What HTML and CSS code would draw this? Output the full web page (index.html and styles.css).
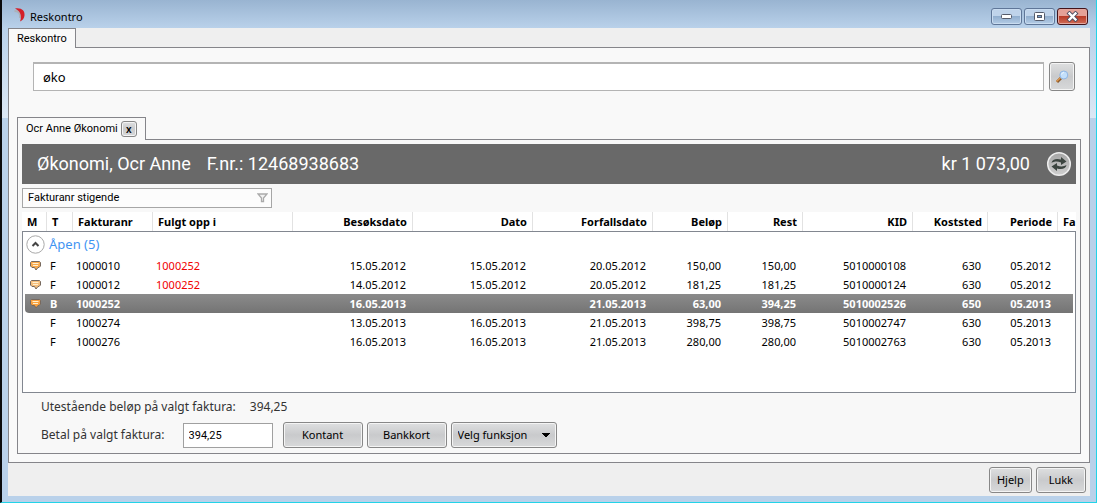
FILE: index.html
```html
<!DOCTYPE html>
<html lang="no">
<head>
<meta charset="utf-8">
<title>Reskontro</title>
<link rel="stylesheet" href="styles.css">
</head>
<body>
<div class="window">
  <header class="titlebar">
    <svg class="app-icon" width="12" height="16" viewBox="0 0 12 16" aria-hidden="true">
      <path d="M.5 4C4.500 4 7 6.500 6 11" fill="none" stroke="#aeb0b6" stroke-width="2"/>
      <path d="M1 1.500C7.500 .5 11 3.500 10.500 8.500C10.200 11.500 8.500 13.500 6 14.500C8 9.500 7 4.500 1 1.500Z" fill="#d3202a"/>
    </svg>
    <h1 class="title">Reskontro</h1>
    <div class="window-controls">
      <button class="wc" aria-label="Minimer"><svg width="13" height="7" viewBox="0 0 13 7"><rect x="1.500" y="1.500" width="10" height="4" rx="1" fill="#fff" stroke="#555b6b"/></svg></button>
      <button class="wc" aria-label="Maksimer"><svg width="13" height="11" viewBox="0 0 13 11"><rect x="1.500" y="1.500" width="10" height="8" rx="1" fill="#fff" stroke="#555b6b"/><rect x="4.500" y="4.500" width="4" height="2" fill="#7ba4cf" stroke="#555b6b"/></svg></button>
      <button class="wc wc-close" aria-label="Lukk vindu"><svg width="13" height="11" viewBox="0 0 13 11"><path d="M3.500 2.500L9.500 8.500M9.500 2.500L3.500 8.500" stroke="#4d4c60" stroke-width="4.200" stroke-linecap="square"/><path d="M3.500 2.500L9.500 8.500M9.500 2.500L3.500 8.500" stroke="#fff" stroke-width="2.400" stroke-linecap="square"/></svg></button>
    </div>
  </header>

  <div class="client">
    <div class="tabstrip"><button class="tab">Reskontro</button></div>
    <main class="page">
      <form class="search">
        <input class="search-input" type="text" value="øko" aria-label="Søk">
        <button class="btn search-btn" type="button" aria-label="Søk">
          <svg width="14" height="14" viewBox="0 0 14 14"><path d="M6 8L2 12" stroke="#8b5a2b" stroke-width="3"/><path d="M5.500 7.800L1.500 11.500" stroke="#e0994f" stroke-width="1.300"/><circle cx="8.800" cy="5" r="4" fill="#c3dffb" stroke="#8fb5e3"/><path d="M6.500 4.500A2.500 2.500 0 0 1 9 2.500" stroke="#eef7ff" fill="none"/></svg>
        </button>
      </form>

      <div class="tabstrip inner-strip">
        <div class="tab inner-tab"><span>Ocr Anne Økonomi</span><button class="btn tab-close" aria-label="Lukk fane">x</button></div>
      </div>
      <section class="panel">
        <div class="patient">
          <span>Økonomi, Ocr Anne</span>
          <span>F.nr.: 12468938683</span>
          <span class="balance">kr 1 073,00</span>
          <button class="refresh" aria-label="Oppdater">
            <svg width="26" height="26" viewBox="0 0 26 26"><defs><linearGradient id="disc" x2="0" y2="1"><stop offset="0" stop-color="#a5a5a5"/><stop offset="1" stop-color="#cfcfcf"/></linearGradient></defs><circle cx="13" cy="13" r="11.300" fill="url(#disc)" stroke="#ededed" stroke-width="1.500"/><path d="M5.500 12C6 8.500 10 7 15 8.500V6L20.500 10.500L15 14V11.500C11 10 8 10.500 5.500 12Z" fill="#3c4540"/><path d="M20.500 14C20 17.500 16 19 11 17.500V20L5.500 15.500L11 12V14.500C15 16 18 15.500 20.500 14Z" fill="#3c4540"/></svg>
          </button>
        </div>

        <div class="sort">
          <select class="sort-select" aria-label="Sortering"><option>Fakturanr stigende</option></select>
          <svg class="funnel" width="11" height="10" viewBox="0 0 11 10" aria-hidden="true"><path d="M1 1H10L6.500 5V8.500H4.500V5Z" fill="#f2f2f2" stroke="#aaa" stroke-width="1.300"/></svg>
        </div>

        <div class="grid">
          <table class="invoices">
            <colgroup><col class="c-m"><col class="c-t"><col class="c-nr"><col class="c-follow"><col class="c-date"><col class="c-date"><col class="c-date"><col class="c-sum"><col class="c-sum"><col class="c-kid"><col class="c-sum"><col class="c-per"><col></colgroup>
            <thead>
              <tr><th>M</th><th>T</th><th>Fakturanr</th><th>Fulgt opp i</th><th class="num">Besøksdato</th><th class="num">Dato</th><th class="num">Forfallsdato</th><th class="num">Beløp</th><th class="num">Rest</th><th class="num">KID</th><th class="num">Koststed</th><th class="num">Periode</th><th>Fa</th></tr>
            </thead>
            <tbody>
              <tr class="group"><td colspan="13"><button class="group-toggle"><svg width="19" height="19" viewBox="0 0 19 19"><circle cx="9.500" cy="9.500" r="8.700" fill="#fff" stroke="#a8a8a8"/><path d="M6.500 11L9.500 8L12.500 11" fill="none" stroke="#444" stroke-width="2"/></svg><span>Åpen (5)</span></button></td></tr>
              <tr><td class="note"><svg width="11" height="10" viewBox="0 0 11 10"><path d="M1.500 .500H9.500L10.500 1.500V5L9 6.500H8L6 9L4.500 6.500H2L.500 5V1.500Z" fill="#f9a94c" stroke="#76695f"/><path d="M2.500 2.500H8.500M3 4.500H8" stroke="#fff0cf"/></svg></td><td>F</td><td>1000010</td><td class="follow">1000252</td><td class="num">15.05.2012</td><td class="num">15.05.2012</td><td class="num">20.05.2012</td><td class="num">150,00</td><td class="num">150,00</td><td class="num">5010000108</td><td class="num">630</td><td class="num">05.2012</td><td></td></tr>
              <tr><td class="note"><svg width="11" height="10" viewBox="0 0 11 10"><path d="M1.500 .500H9.500L10.500 1.500V5L9 6.500H8L6 9L4.500 6.500H2L.500 5V1.500Z" fill="#f5bd7b" stroke="#76695f"/><path d="M2.500 2.500H8.500M3 4.500H8" stroke="#fff0cf"/></svg></td><td>F</td><td>1000012</td><td class="follow">1000252</td><td class="num">14.05.2012</td><td class="num">15.05.2012</td><td class="num">20.05.2012</td><td class="num">181,25</td><td class="num">181,25</td><td class="num">5010000124</td><td class="num">630</td><td class="num">05.2012</td><td></td></tr>
              <tr class="selected"><td class="note"><svg width="11" height="10" viewBox="0 0 11 10"><path d="M1.500 .500H9.500L10.500 1.500V5L9 6.500H8L6 9L4.500 6.500H2L.500 5V1.500Z" fill="#f9a03c" stroke="#76695f"/><path d="M2.500 2.500H8.500M3 4.500H8" stroke="#fff0cf"/></svg></td><td>B</td><td>1000252</td><td></td><td class="num">16.05.2013</td><td></td><td class="num">21.05.2013</td><td class="num">63,00</td><td class="num">394,25</td><td class="num">5010002526</td><td class="num">650</td><td class="num">05.2013</td><td></td></tr>
              <tr><td></td><td>F</td><td>1000274</td><td></td><td class="num">13.05.2013</td><td class="num">16.05.2013</td><td class="num">21.05.2013</td><td class="num">398,75</td><td class="num">398,75</td><td class="num">5010002747</td><td class="num">630</td><td class="num">05.2013</td><td></td></tr>
              <tr><td></td><td>F</td><td>1000276</td><td></td><td class="num">16.05.2013</td><td class="num">16.05.2013</td><td class="num">21.05.2013</td><td class="num">280,00</td><td class="num">280,00</td><td class="num">5010002763</td><td class="num">630</td><td class="num">05.2013</td><td></td></tr>
            </tbody>
          </table>
        </div>

        <div class="payment">
          <div class="outstanding"><span>Utestående beløp på valgt faktura:</span><output>394,25</output></div>
          <div class="pay-row">
            <label for="amount">Betal på valgt faktura:</label>
            <input class="amount" id="amount" type="text" value="394,25">
            <div class="actions">
              <button class="btn pay-btn">Kontant</button>
              <button class="btn pay-btn">Bankkort</button>
              <select class="btn function-select" aria-label="Velg funksjon"><option>Velg funksjon</option></select>
            </div>
          </div>
        </div>
      </section>
    </main>
    <footer class="footer"><button class="btn">Hjelp</button><button class="btn btn-wide">Lukk</button></footer>
  </div>
</div>
</body>
</html>
```
FILE: styles.css
```css
* { box-sizing: border-box; }

body {
  margin: 0;
  font-family: "Noto Sans", "Open Sans", sans-serif;
  font-size: 11px;
  line-height: 16px;
  color: #000;
}

button, input, select { font: inherit; color: inherit; margin: 0; }
button { padding: 0; }
svg { display: block; flex: none; }

.window {
  min-height: 100vh;
  display: flex;
  flex-direction: column;
  padding: 0 6px 6px;
  border-left: 2px solid #0a0a0c;
  border-right: 1px solid #22d3e8;
  border-bottom: 1px solid #22d3e8;
  background: linear-gradient(#99b4d1, #b9d1ea 28px, #dce8f5 118px, #b9d1ea 118px);
}

.titlebar {
  height: 28px;
  display: flex;
  align-items: center;
  gap: 4px;
  padding: 2px 2px 0 6px;
}

.title { margin: 0; font-size: 11px; font-weight: 400; flex: 1; padding-top: 3px; }

.window-controls { display: flex; gap: 2px; padding-top: 3px; }

.wc {
  width: 31px;
  height: 17px;
  display: flex;
  align-items: center;
  justify-content: center;
  border: 1px solid #5f7698;
  border-radius: 3px;
  box-shadow: inset 0 0 0 1px #c9dcf0;
  background: linear-gradient(#bfd3ea 50%, #92afcf 50%, #b4cce6);
}

.wc-close {
  border-color: #43141b;
  box-shadow: inset 0 0 0 1px #e3a79f;
  background: linear-gradient(#e5a197 50%, #b93c28 50%, #cf6c58);
}

.client { flex: 1; display: flex; flex-direction: column; background: #efefef; }

.tabstrip { display: flex; height: 19px; }

.tab {
  height: 20px;
  padding: 0 8px;
  border: 1px solid #85858a;
  border-bottom: 0;
  background: #f9f9f9;
  font-family: Roboto, "Noto Sans", sans-serif;
  position: relative;
  z-index: 1;
}

.page {
  flex: 1;
  display: flex;
  flex-direction: column;
  padding: 14px 8px 8px;
  border: 1px solid #85858a;
  background: #f9f9f9;
}

.search { display: flex; gap: 5px; padding: 0 6px 0 16px; }

.search-input {
  flex: 1;
  min-width: 0;
  height: 29px;
  padding: 0 9px;
  border: 1px solid #b4b4b4;
  border-top: 2px solid #b4b4b4;
  background: #fff;
  font-size: 13px;
}

.btn {
  height: 26px;
  border: 1px solid #878787;
  border-radius: 3px;
  box-shadow: inset 0 0 0 1px #f4f4f4;
  background: linear-gradient(#dedfe0, #c9cacc 50%, #d8d9da);
}

.search-btn { width: 26px; height: 29px; padding-left: 5px; }

.inner-strip { height: 22px; margin-top: 26px; }

.inner-tab { height: 23px; display: flex; align-items: center; gap: 3px; }

.tab-close {
  width: 16px;
  height: 16px;
  font-family: "Noto Sans", sans-serif;
  font-size: 10px;
  line-height: 12px;
  font-weight: 600;
}

.panel {
  flex: 1;
  display: flex;
  flex-direction: column;
  padding: 4px;
  border: 1px solid #85858a;
  background: #f8f8f8;
}

.patient {
  display: flex;
  align-items: center;
  gap: 16px;
  height: 40px;
  padding: 0 4px 0 15px;
  background: #696969;
  color: #fff;
  font-family: Roboto, "Noto Sans", sans-serif;
  font-size: 18px;
  line-height: 24px;
  white-space: nowrap;
}

.balance { margin-left: auto; }

.refresh { border: 0; background: none; }

.sort { position: relative; width: 250px; margin: 4px 0; }

.sort-select {
  display: block;
  appearance: none;
  width: 100%;
  height: 20px;
  padding: 0 24px 0 5px;
  border: 1px solid #a6a6a6;
  border-radius: 0;
  background: #fcfcfc;
  font-family: Roboto, "Noto Sans", sans-serif;
}

.funnel { position: absolute; right: 4px; top: 5px; pointer-events: none; }

.grid {
  position: relative;
  flex: 1;
  overflow: hidden;
  background: #fff;
}

.grid::after {
  content: "";
  position: absolute;
  inset: 19px 0 0;
  border: 1px solid #828790;
  pointer-events: none;
}

.invoices {
  width: 100%;
  table-layout: fixed;
  border-collapse: separate;
  border-spacing: 0;
  white-space: nowrap;
}

.c-m { width: 25px; }
.c-t { width: 26px; }
.c-nr { width: 80px; }
.c-follow { width: 140px; }
.c-date { width: 120px; }
.c-sum { width: 75px; }
.c-kid { width: 110px; }
.c-per { width: 70px; }

.invoices th {
  height: 20px;
  padding: 0 5px;
  text-align: left;
  font-weight: 700;
  line-height: 18px;
  border-right: 1px solid #e2e2e2;
  overflow: hidden;
}

.invoices th:last-child { border-right: 0; padding-right: 0; }

.invoices td { height: 19px; padding: 0 7px 0 3px; line-height: 18px; }

.invoices .num { text-align: right; }

.invoices .group td { height: 24px; padding: 0 4px; }

.group-toggle {
  display: flex;
  align-items: center;
  gap: 4px;
  border: 0;
  background: none;
  color: #3f94f2;
  font-size: 13px;
}

.invoices .note { padding: 0 0 0 8px; }

.invoices .follow { color: #f00000; }

.selected td {
  background: linear-gradient(#8b8b8b, #747474);
  background-clip: padding-box;
  color: #fff;
  font-weight: 700;
}

.invoices .selected td:first-child {
  padding-left: 5px;
  border-left: 3px solid transparent;
  border-bottom-left-radius: 7px 4px;
}

.selected td:last-child { border-right: 3px solid transparent; }

.payment { color: #333; font-size: 12px; padding: 5px 0 1px 19px; }

.outstanding { display: flex; gap: 14px; height: 18px; align-items: center; }

.pay-row { display: flex; align-items: center; margin-top: 6px; height: 26px; }

.amount {
  width: 90px;
  height: 25px;
  margin: 0 10px 0 18px;
  padding: 0 5px;
  border: 1px solid #a0a0a0;
  background: #fff;
  color: #000;
  font-family: Roboto, "Noto Sans", sans-serif;
  font-size: 11px;
}

.actions { display: flex; gap: 4px; color: #000; font-size: 11px; }

.pay-btn { width: 80px; }

.function-select {
  appearance: none;
  width: 106px;
  padding: 0 6px;
  background-image:
    linear-gradient(to bottom left, #000 50%, transparent 51%),
    linear-gradient(to bottom right, #000 50%, transparent 51%),
    linear-gradient(#dedfe0, #c9cacc 50%, #d8d9da);
  background-repeat: no-repeat;
  background-size: 4px 4px, 4px 4px, 100% 100%;
  background-position: right 10px top 10px, right 6px top 10px, 0 0;
}

.footer { display: flex; justify-content: flex-end; gap: 4px; padding: 4px 4px 3px; }

.footer .btn { padding: 0 7px; }
.footer .btn-wide { padding: 0 12px; }
```
